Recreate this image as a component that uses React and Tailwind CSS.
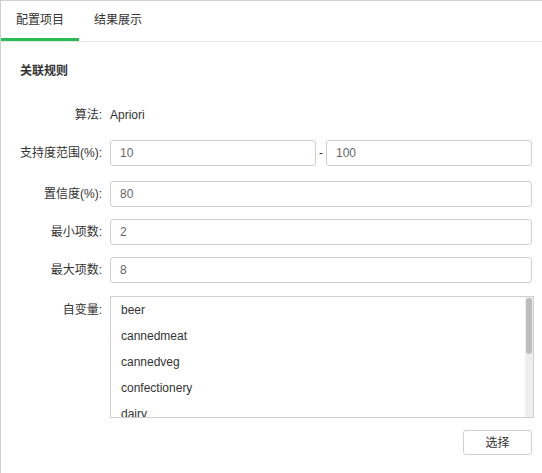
import React, { useState } from 'react'

const items = [
  'beer',
  'cannedmeat',
  'cannedveg',
  'confectionery',
  'dairy',
  'fish',
  'freshmeat',
  'frozenmeal',
  'fruitveg',
  'softdrink',
  'wine',
]

const Row = ({ label, children, className = '' }) => (
  <div className={`flex items-center ${className}`}>
    <div className="w-[101px] shrink-0 text-right">{label}</div>
    <div className="flex-1 ml-[8px] pr-[10px] flex items-center">{children}</div>
  </div>
)

const Field = ({ value }) => (
  <input
    defaultValue={value}
    className="w-full h-[26px] border border-[#d0d0d0] rounded-[3px] pl-[9px] text-[12px] text-[#666] outline-none bg-white"
  />
)

const App = () => {
  const [tab, setTab] = useState(0)

  return (
    <div className="w-full h-[473px] bg-white border-l border-t border-[#cfcfcf] text-[12px] text-[#333] font-['Liberation_Sans','Noto_Sans_CJK_SC',sans-serif] overflow-hidden">
      <div className="h-[41px] border-b border-[#e6e6e6] flex">
        {['配置项目', '结果展示'].map((t, i) => (
          <div
            key={t}
            onClick={() => setTab(i)}
            className={`w-[78px] h-full flex items-center justify-center cursor-pointer border-b-[3px] pt-[1px] ${
              tab === i ? 'border-[#2bbb55] text-[#333]' : 'border-transparent text-[#333]'
            }`}
          >
            {t}
          </div>
        ))}
      </div>

      <div className="pl-[19px] pt-[20px] h-[18px] leading-[18px] font-bold box-content">关联规则</div>

      <Row label="算法:" className="mt-[22px] h-[26px]">
        <span>Apriori</span>
      </Row>

      <Row label="支持度范围(%):" className="mt-[12px]">
        <Field value="10" />
        <span className="w-[10px] shrink-0 text-center">-</span>
        <Field value="100" />
      </Row>

      <Row label="置信度(%):" className="mt-[15px]">
        <Field value="80" />
      </Row>

      <Row label="最小项数:" className="mt-[12px]">
        <Field value="2" />
      </Row>

      <Row label="最大项数:" className="mt-[12px]">
        <Field value="8" />
      </Row>

      <div className="flex items-start mt-[13px]">
        <div className="w-[101px] shrink-0 text-right pt-[5px]">自变量:</div>
        <div className="relative ml-[8px] w-[424px] h-[122px] border border-[#d0d0d0]">
          <div className="h-full overflow-hidden pr-[8px]">
            {items.map((it) => (
              <div key={it} className="h-[26px] leading-[26px] pl-[10px] text-[#333]">
                {it}
              </div>
            ))}
          </div>
          <div className="absolute top-0 bottom-0 right-0 w-[8px] bg-[#efefef]">
            <div className="mt-[1px] mx-[1px] h-[56px] rounded-[3px] bg-[#bdbdbd]" />
          </div>
        </div>
      </div>

      <div className="flex justify-end pr-[10px] mt-[12px]">
        <button className="w-[69px] h-[25px] border border-[#d0d0d0] rounded-[3px] bg-white text-[#333] text-[12px]">
          选择
        </button>
      </div>
    </div>
  )
}

export default App
